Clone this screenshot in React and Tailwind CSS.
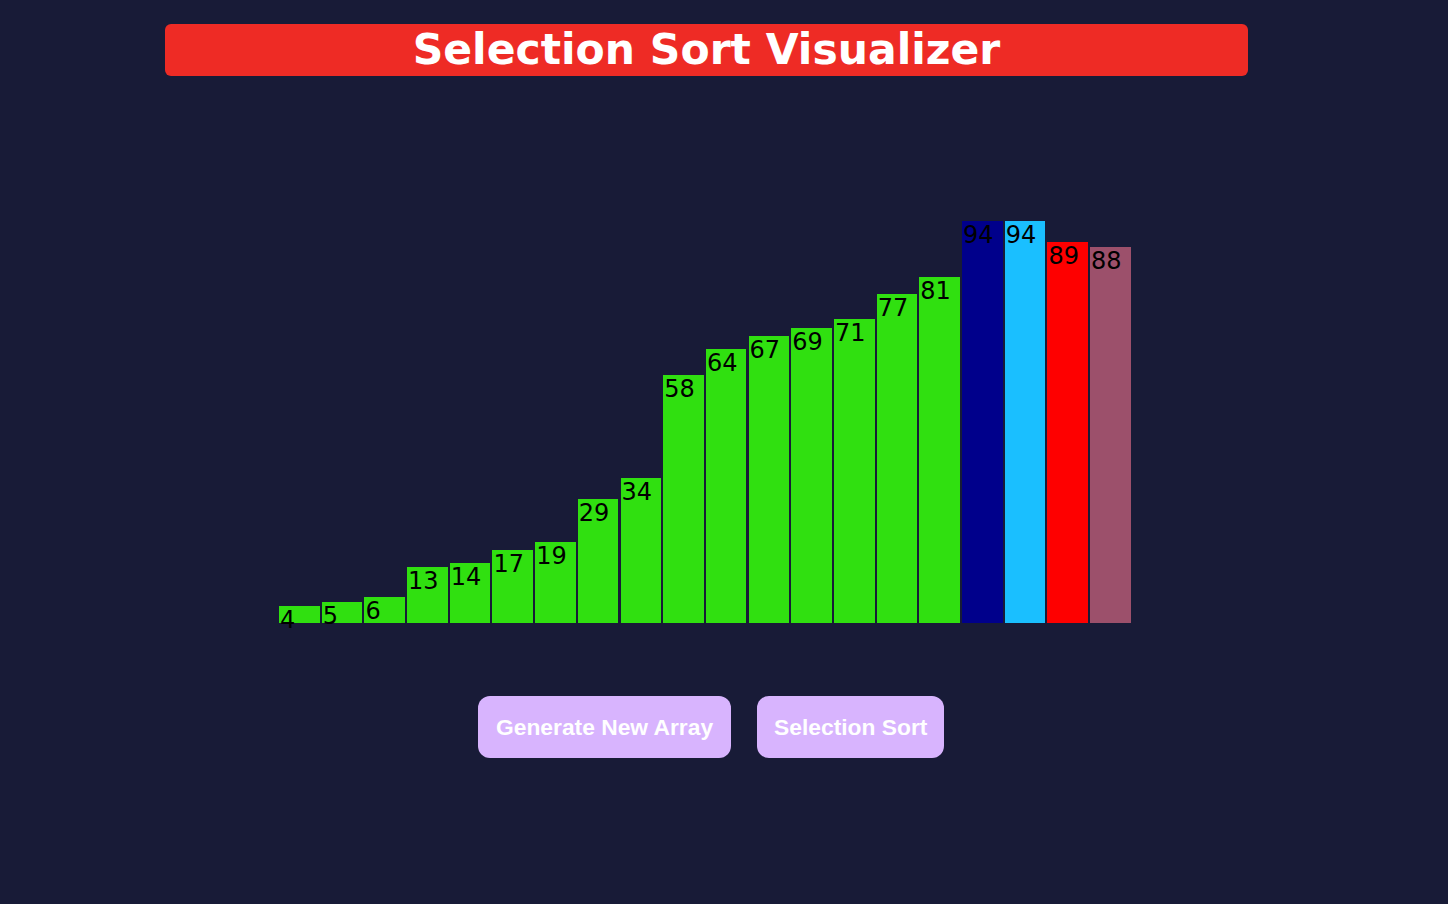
import React from "react";

const bars = [
  { v: 4, c: "bg-[#30e010]" },
  { v: 5, c: "bg-[#30e010]" },
  { v: 6, c: "bg-[#30e010]" },
  { v: 13, c: "bg-[#30e010]" },
  { v: 14, c: "bg-[#30e010]" },
  { v: 17, c: "bg-[#30e010]" },
  { v: 19, c: "bg-[#30e010]" },
  { v: 29, c: "bg-[#30e010]" },
  { v: 34, c: "bg-[#30e010]" },
  { v: 58, c: "bg-[#30e010]" },
  { v: 64, c: "bg-[#30e010]" },
  { v: 67, c: "bg-[#30e010]" },
  { v: 69, c: "bg-[#30e010]" },
  { v: 71, c: "bg-[#30e010]" },
  { v: 77, c: "bg-[#30e010]" },
  { v: 81, c: "bg-[#30e010]" },
  { v: 94, c: "bg-[#00008b]" },
  { v: 94, c: "bg-[#1abfff]" },
  { v: 89, c: "bg-[#fe0000]" },
  { v: 88, c: "bg-[#9c506b]" },
];

const App = () => {
  return (
    <div className="min-h-[904px] w-full bg-[#181b37] pt-[24px] font-['DejaVu_Sans',sans-serif]">
      <div className="ml-[165px] flex h-[52px] w-[1083px] items-center justify-center rounded-md bg-[#ee2b25]">
        <h1 className="text-[42.5px] font-bold leading-none text-white">
          Selection Sort Visualizer
        </h1>
      </div>

      <div className="ml-[279px] flex h-[547px] items-end gap-[2.1px]">
        {bars.map((bar, i) => (
          <div
            key={i}
            className={`w-[40.6px] shrink-0 pl-[1px] pt-[1px] text-left text-[24px] leading-[1.164] text-black ${bar.c}`}
            style={{ height: `${bar.v * 4.277}px` }}
          >
            <span className="block whitespace-nowrap">{bar.v}</span>
          </div>
        ))}
      </div>

      <div className="ml-[478px] mt-[73px] flex gap-[26px] font-['Liberation_Sans',Arial,sans-serif]">
        <button className="h-[62px] rounded-xl bg-[#d8b4fe] px-[18px] text-[22.8px] font-bold text-white">
          Generate New Array
        </button>
        <button className="h-[62px] rounded-xl bg-[#d8b4fe] px-[17px] text-[22.8px] font-bold text-white">
          Selection Sort
        </button>
      </div>
    </div>
  );
};

export default App;
